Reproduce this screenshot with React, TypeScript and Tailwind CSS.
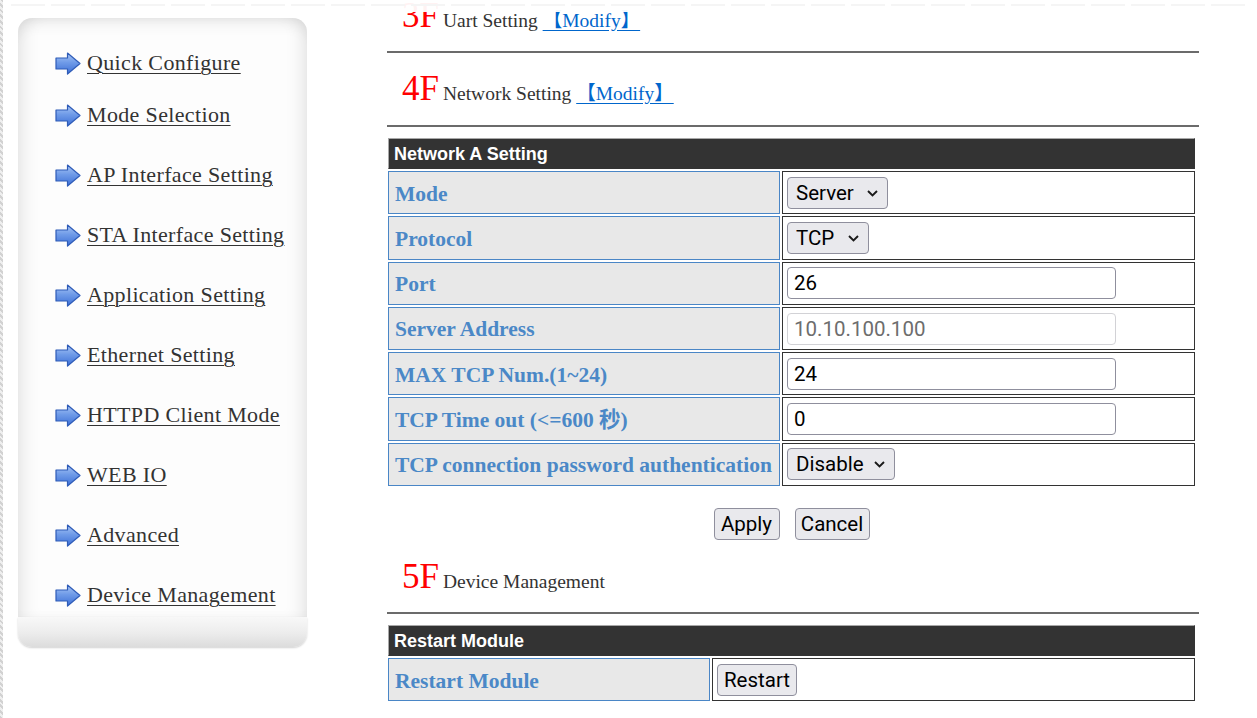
import React from "react";

const serif = "font-['Liberation_Serif','Noto_Sans_CJK_SC',serif]";

const menu = [
  "Quick Configure",
  "Mode Selection",
  "AP Interface Setting",
  "STA Interface Setting",
  "Application Setting",
  "Ethernet Setting",
  "HTTPD Client Mode",
  "WEB IO",
  "Advanced",
  "Device Management",
];

function Arrow() {
  return (
    <svg width="26" height="23" viewBox="0 0 26 23" className="shrink-0">
      <defs>
        <linearGradient id="ag" x1="0" y1="0" x2="0" y2="1">
          <stop offset="0" stopColor="#a9c6f5" />
          <stop offset="0.45" stopColor="#6f9be8" />
          <stop offset="1" stopColor="#3d6fd6" />
        </linearGradient>
      </defs>
      <path
        d="M1 6 H12.5 V1 L25 11.5 L12.5 22 V17 H1 Z"
        fill="url(#ag)"
        stroke="#2f5cb8"
        strokeWidth="1.2"
        strokeLinejoin="round"
      />
    </svg>
  );
}

function Heading({ num, title, link }: { num: string; title: string; link?: boolean }) {
  return (
    <div className={`flex h-[40px] items-baseline pl-[16px] ${serif}`}>
      <span className="text-[35px] leading-[40px] text-[#ff0000]">{num}</span>
      <span className="ml-[4px] text-[19.5px] leading-[24px] text-[#333]">{title}</span>
      {link && (
        <>
          <span className="text-[19.5px] leading-[24px]">&nbsp;</span>
          <a className="text-[19.5px] leading-[24px] text-[#0066cc] underline underline-offset-[3px]" href="#">
            【Modify】
          </a>
        </>
      )}
    </div>
  );
}

function Rule() {
  return <div className="ml-[1px] h-[2px] w-[812px] bg-[#6b6b6b]" />;
}

const ctl = "font-['Roboto',sans-serif] text-[20.5px]";

function Select({ value, w, options }: { value: string; w: string; options: string[] }) {
  return (
    <div className="relative inline-block align-middle">
      <select
        defaultValue={value}
        className={`${ctl} ${w} block h-[32px] appearance-none rounded-[4px] border border-[#8f8f9d] bg-[#e9e9ed] pl-[8px] text-black outline-none`}
      >
        {options.map((o) => (
          <option key={o}>{o}</option>
        ))}
      </select>
      <svg className="pointer-events-none absolute right-[10px] top-[13px]" width="11" height="7" viewBox="0 0 11 7">
        <path d="M1 1 L5.5 5.5 L10 1" fill="none" stroke="#1a1a1a" strokeWidth="1.9" />
      </svg>
    </div>
  );
}

function Input({ value, disabled }: { value: string; disabled?: boolean }) {
  return (
    <input
      defaultValue={value}
      readOnly={disabled}
      className={`${ctl} block h-[32px] w-[329px] rounded-[4px] border bg-white pl-[6px] outline-none ${
        disabled ? "border-[#d2d2d6] text-[#6d6d6d]" : "border-[#8f8f9d] text-black"
      }`}
    />
  );
}

function Btn({ children, w }: { children: React.ReactNode; w: string }) {
  return (
    <button
      className={`${ctl} ${w} h-[32px] rounded-[4px] border border-[#8f8f9d] bg-[#e9e9ed] text-center text-black`}
    >
      {children}
    </button>
  );
}

const labelCls = `h-[43.3px] border border-[#4a86c6] bg-[#e8e8e8] pl-[6px] pt-[2px] align-middle text-[21.5px] font-bold text-[#4b88c7] ${serif}`;
const valueCls = "border border-[#333] bg-white pl-[4px] align-middle";
const headCls =
  "h-[31px] border border-t-[#a8a8a8] border-l-[#a8a8a8] border-r-[#333] border-b-[#333] bg-[#333] pl-[5px] pt-[1px] text-left align-middle font-['Liberation_Sans',Arial,sans-serif] text-[18px] font-bold text-white";

export default function App() {
  const rows: [string, React.ReactNode][] = [
    ["Mode", <Select value="Server" w="w-[101px]" options={["Server", "Client"]} />],
    ["Protocol", <Select value="TCP" w="w-[82px]" options={["TCP", "UDP"]} />],
    ["Port", <Input value="26" />],
    ["Server Address", <Input value="10.10.100.100" disabled />],
    ["MAX TCP Num.(1~24)", <Input value="24" />],
    ["TCP Time out (<=600 秒)", <Input value="0" />],
    ["TCP connection password authentication", <Select value="Disable" w="w-[108px]" options={["Disable", "Enable"]} />],
  ];

  return (
    <div className="relative flex h-[718px] w-[1257px] overflow-hidden bg-white">
      {/* left hatched edge */}
      <div className="w-[3px] shrink-0 bg-[repeating-linear-gradient(45deg,#d2d2d2_0_2px,#efefef_2px_4px)]" />

      {/* sidebar */}
      <div className="w-[383px] shrink-0 pl-[15px] pt-[18px]">
        <div className="w-[289px]">
          <div className="h-[599px] rounded-t-[14px] bg-[#fdfdfd] pl-[37px] pt-[32px] shadow-[inset_0_12px_16px_-8px_rgba(0,0,0,0.09),inset_14px_0_18px_-10px_rgba(0,0,0,0.10),inset_-14px_0_18px_-10px_rgba(0,0,0,0.10)]">
            {menu.map((m, i) => (
              <div key={m} className={i === 0 ? "h-[52px]" : "h-[60px]"}>
                <div className="flex h-[26px] items-center gap-[6px]">
                  <Arrow />
                  <a
                    href="#"
                    className={`${serif} text-[22px] leading-[26px] tracking-[0.35px] text-[#333] underline decoration-1 underline-offset-[3px]`}
                  >
                    {m}
                  </a>
                </div>
              </div>
            ))}
          </div>
          <div className="h-[30px] rounded-b-[14px] bg-[linear-gradient(to_bottom,#f8f8f8,#ececec_55%,#dcdcdc)] shadow-[0_1px_2px_rgba(0,0,0,0.18)]" />
        </div>
      </div>

      {/* main */}
      <div className="flex w-[813px] shrink-0 flex-col">
        <div className="mt-[-4px]">
          <Heading num="3F" title="Uart Setting" link />
        </div>
        <div className="mt-[15px]">
          <Rule />
        </div>
        <div className="mt-[16px]">
          <Heading num="4F" title="Network Setting" link />
        </div>
        <div className="mt-[16px]">
          <Rule />
        </div>

        <table className="mt-[9px] w-[811px] border-separate border-spacing-[2px]">
          <tbody>
            <tr>
              <th colSpan={2} className={headCls}>
                Network A Setting
              </th>
            </tr>
            {rows.map(([l, v]) => (
              <tr key={l}>
                <td className={`${labelCls} w-[392px] whitespace-nowrap`}>{l}</td>
                <td className={valueCls}>{v}</td>
              </tr>
            ))}
          </tbody>
        </table>

        <div className="mt-[20px] flex w-[811px] justify-center gap-[15px]">
          <Btn w="w-[66px]">Apply</Btn>
          <Btn w="w-[75px]">Cancel</Btn>
        </div>

        <div className="mt-[17px]">
          <Heading num="5F" title="Device Management" />
        </div>
        <div className="mt-[15px]">
          <Rule />
        </div>

        <table className="mt-[9px] w-[811px] border-separate border-spacing-[2px]">
          <tbody>
            <tr>
              <th colSpan={2} className={headCls}>
                Restart Module
              </th>
            </tr>
            <tr>
              <td className={`${labelCls} w-[322px]`}>Restart Module</td>
              <td className={valueCls}>
                <Btn w="w-[80px]">Restart</Btn>
              </td>
            </tr>
          </tbody>
        </table>
      </div>

      {/* fixed top strip overlay */}
      <div className="absolute left-[3px] right-0 top-0 h-[12px] bg-white/95">
        <div className="mx-[8px] mt-[4px] h-[2px] bg-[repeating-linear-gradient(90deg,#f5f5f5_0_34px,transparent_34px_40px)]" />
      </div>
    </div>
  );
}
